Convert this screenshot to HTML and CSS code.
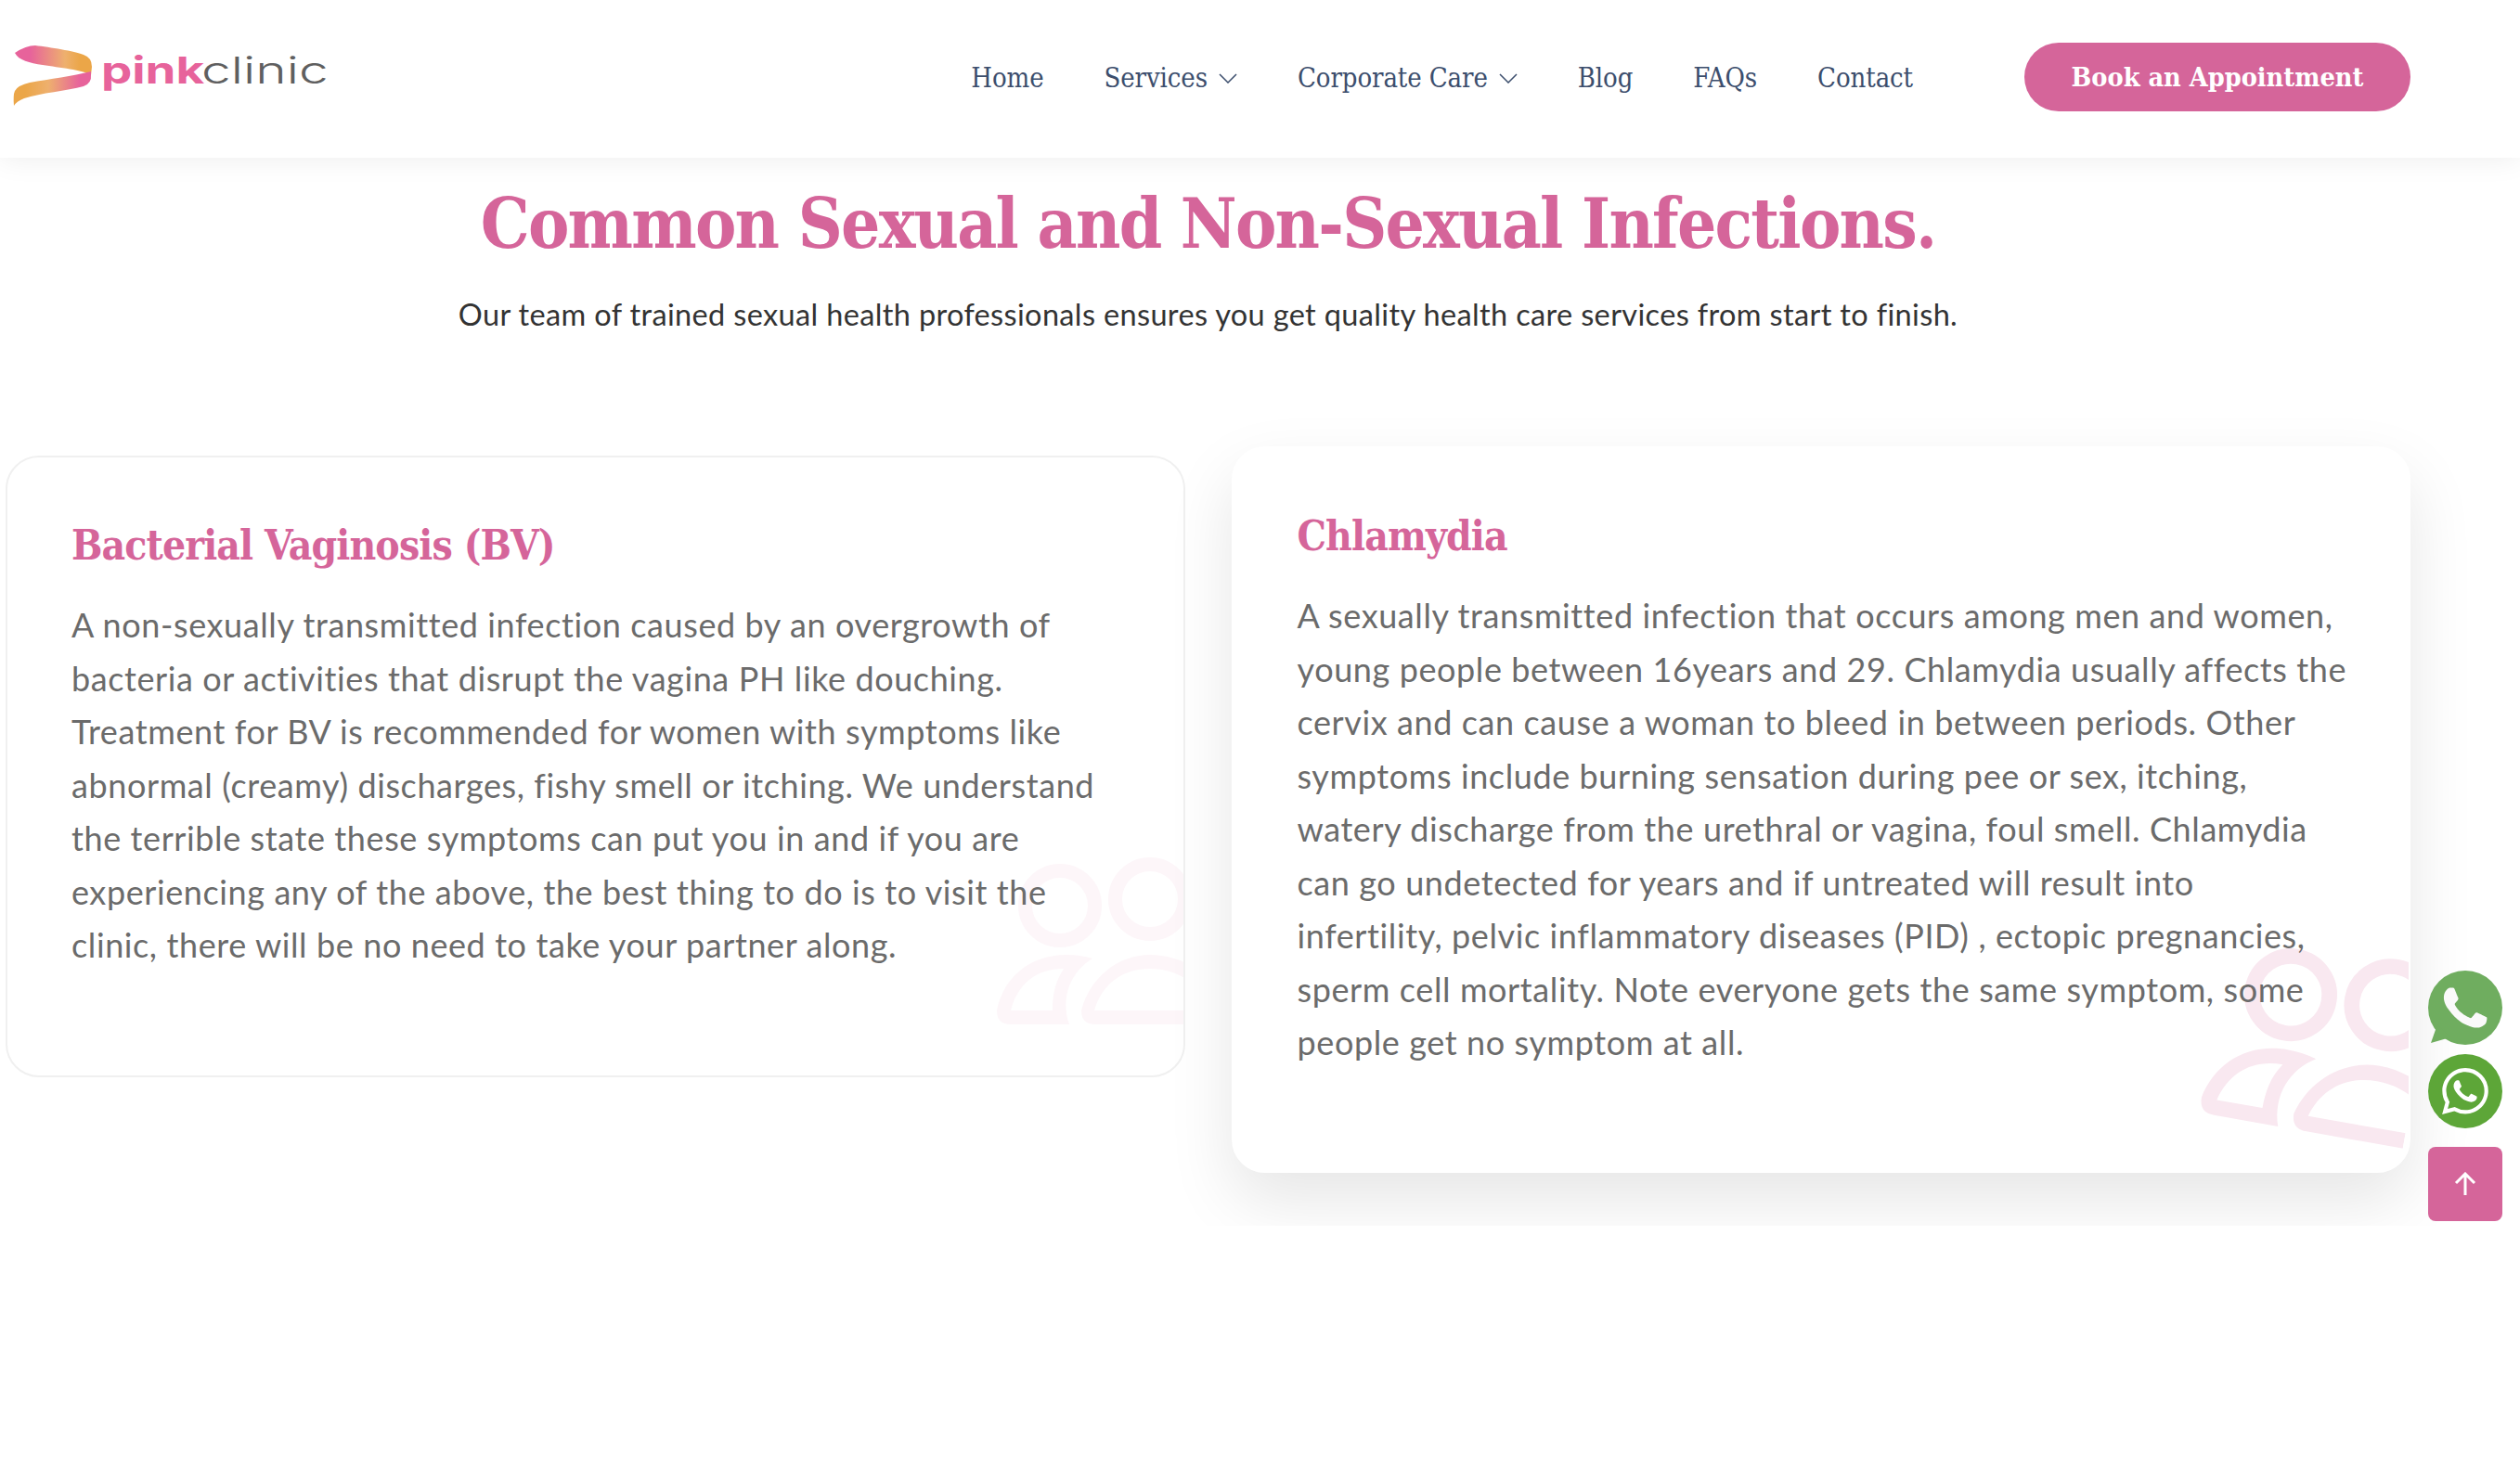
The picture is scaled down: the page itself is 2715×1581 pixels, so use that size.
FILE: index.html
```html
<!DOCTYPE html>
<html lang="en">
<head>
    <meta charset="UTF-8">
    <meta name="viewport" content="width=device-width, initial-scale=1.0">
    <title>Pink Clinic</title>
    <link rel="stylesheet" href="styles.css">
</head>
<body>
    <svg class="sprites" width="0" height="0">
        <defs>
            <symbol id="users" viewBox="1060 910 216 200">
                <circle cx="1143" cy="977" r="37.5" fill="none" stroke="currentColor" stroke-width="15"/>
                <circle cx="1240" cy="970" r="37.5" fill="none" stroke="currentColor" stroke-width="15"/>
                <path fill="currentColor" fill-rule="evenodd" d="M1090 1105Q1075 1105 1075 1090C1082 1055 1110 1030 1150 1030Q1165 1030 1178 1034C1155 1048 1143 1075 1153 1105ZM1090 1090H1135C1135 1075 1137 1060 1147 1045C1117 1045 1097 1062 1090 1090Z"/>
                <path fill="currentColor" fill-rule="evenodd" d="M1181 1105Q1166 1105 1166 1090C1175 1055 1205 1030 1240 1030C1280 1030 1310 1055 1318 1090Q1318 1105 1303 1105ZM1180 1090H1304C1296 1062 1270 1045 1240 1045C1210 1045 1188 1062 1180 1090Z"/>
            </symbol>
            <symbol id="chevron" viewBox="0 0 20 11">
                <path d="M1 1l9 9 9-9" fill="none" stroke="currentColor" stroke-width="1.5"/>
            </symbol>
            <linearGradient id="ribbonTop" x1="0" y1="0" x2="1" y2="0">
                <stop offset="0.2" stop-color="#e7639b"/>
                <stop offset="0.65" stop-color="#eeb06e"/>
                <stop offset="0.85" stop-color="#eba648"/>
            </linearGradient>
            <linearGradient id="ribbonBottom" x1="0" y1="0" x2="1" y2="0">
                <stop offset="0.15" stop-color="#eba648"/>
                <stop offset="0.45" stop-color="#eeb06e"/>
                <stop offset="0.85" stop-color="#e7639b"/>
            </linearGradient>
        </defs>
    </svg>

    <header class="site-header">
        <a class="logo" href="#">
            <svg class="logo-mark" viewBox="0 0 86 66" width="86" height="66">
                <path fill="url(#ribbonTop)" d="M2 9Q14 1 24 1C40 3 66 7 76 11Q85 14 85 24L84 33C75 27 50 25 32 22C18 20 6 17 2 9Z"/>
                <path fill="url(#ribbonBottom)" d="M84 32Q85 42 76 45C58 50 30 52 12 58Q4 61 1 66Q0 54 2 50Q5 44 18 41C40 37 64 34 84 29Z"/>
            </svg>
            <span class="logo-text"><span class="logo-pink">pink</span><span class="logo-clinic">clinic</span></span>
        </a>
        <div class="header-right">
            <nav class="main-nav">
                <a href="#">Home</a>
                <a href="#">Services <svg class="chevron"><use href="#chevron"/></svg></a>
                <a href="#">Corporate Care <svg class="chevron"><use href="#chevron"/></svg></a>
                <a href="#">Blog</a>
                <a href="#">FAQs</a>
                <a href="#">Contact</a>
            </nav>
            <a class="btn-book" href="#">Book an Appointment</a>
        </div>
    </header>

    <section class="infections">
        <h1 class="section-title">Common Sexual and Non-Sexual Infections.</h1>
        <p class="section-sub">Our team of trained sexual health professionals ensures you get quality health care services from start to finish.</p>

        <div class="card-grid">
            <article class="card">
                <h3>Bacterial Vaginosis (BV)</h3>
                <p>A non-sexually transmitted infection caused by an overgrowth of bacteria or activities that disrupt the vagina PH like douching. Treatment for BV is recommended for women with symptoms like abnormal (creamy) discharges, fishy smell or itching. We understand the terrible state these symptoms can put you in and if you are experiencing any of the above, the best thing to do is to visit the clinic, there will be no need to take your partner along.</p>
                <svg class="card-icon"><use href="#users"/></svg>
            </article>
            <article class="card card-active">
                <h3>Chlamydia</h3>
                <p>A sexually transmitted infection that occurs among men and women, young people between 16years and 29. Chlamydia usually affects the cervix and can cause a woman to bleed in between periods. Other symptoms include burning sensation during pee or sex, itching, watery discharge from the urethral or vagina, foul smell. Chlamydia can go undetected for years and if untreated will result into infertility, pelvic inflammatory diseases (PID) , ectopic pregnancies, sperm cell mortality. Note everyone gets the same symptom, some people get no symptom at all.</p>
                <svg class="card-icon"><use href="#users"/></svg>
            </article>
        </div>
    </section>

    <div class="float-actions">
        <a class="float-btn" href="#" aria-label="Call">
            <svg viewBox="0 0 80 80" width="80" height="80">
                <circle cx="40" cy="40" r="40" fill="#6fad5f"/>
                <path d="M10 58L3 78L24 72Z" fill="#6fad5f"/>
                <path fill="#fafafa" transform="translate(-6.2 -6.2) scale(3.85)" d="M17.472 14.382c-.297-.149-1.758-.867-2.03-.967-.273-.099-.471-.148-.67.15-.197.297-.767.966-.94 1.164-.173.199-.347.223-.644.075-.297-.15-1.255-.463-2.39-1.475-.883-.788-1.48-1.761-1.653-2.059-.173-.297-.018-.458.13-.606.134-.133.298-.347.446-.52.149-.174.198-.298.298-.497.099-.198.05-.371-.025-.52-.075-.149-.669-1.612-.916-2.207-.242-.579-.487-.5-.669-.51-.173-.008-.371-.01-.57-.01-.198 0-.52.074-.792.372-.272.297-1.04 1.016-1.04 2.479 0 1.462 1.065 2.875 1.213 3.074.149.198 2.096 3.2 5.077 4.487.709.306 1.262.489 1.694.625.712.227 1.36.195 1.871.118.571-.085 1.758-.719 2.006-1.413.248-.694.248-1.289.173-1.413-.074-.124-.272-.198-.57-.347z"/>
            </svg>
        </a>
        <a class="float-btn" href="#" aria-label="WhatsApp">
            <svg viewBox="0 0 80 80" width="80" height="80">
                <circle cx="40" cy="40" r="40" fill="#5da638"/>
                <path fill="#fff" transform="translate(15 15) scale(2.08)" d="M17.472 14.382c-.297-.149-1.758-.867-2.03-.967-.273-.099-.471-.148-.67.15-.197.297-.767.966-.94 1.164-.173.199-.347.223-.644.075-.297-.15-1.255-.463-2.39-1.475-.883-.788-1.48-1.761-1.653-2.059-.173-.297-.018-.458.13-.606.134-.133.298-.347.446-.52.149-.174.198-.298.298-.497.099-.198.05-.371-.025-.52-.075-.149-.669-1.612-.916-2.207-.242-.579-.487-.5-.669-.51-.173-.008-.371-.01-.57-.01-.198 0-.52.074-.792.372-.272.297-1.04 1.016-1.04 2.479 0 1.462 1.065 2.875 1.213 3.074.149.198 2.096 3.2 5.077 4.487.709.306 1.262.489 1.694.625.712.227 1.36.195 1.871.118.571-.085 1.758-.719 2.006-1.413.248-.694.248-1.289.173-1.413-.074-.124-.272-.198-.57-.347m-5.421 7.403h-.004a9.87 9.87 0 01-5.031-1.378l-.361-.214-3.741.982.998-3.648-.235-.374a9.86 9.86 0 01-1.51-5.26c.001-5.45 4.436-9.884 9.888-9.884 2.64 0 5.122 1.03 6.988 2.898a9.825 9.825 0 012.893 6.994c-.003 5.45-4.437 9.884-9.885 9.884m8.413-18.297A11.815 11.815 0 0012.05 0C5.495 0 .16 5.335.157 11.892c0 2.096.547 4.142 1.588 5.945L.057 24l6.305-1.654a11.882 11.882 0 005.683 1.448h.005c6.554 0 11.89-5.335 11.893-11.893a11.821 11.821 0 00-3.48-8.413z"/>
            </svg>
        </a>
        <a class="back-top" href="#" aria-label="Back to top">
            <svg viewBox="0 0 24 26" width="24" height="26">
                <path d="M12 25V2M2 12L12 2l10 10" fill="none" stroke="#fff" stroke-width="3"/>
            </svg>
        </a>
    </div>
</body>
</html>
```

FILE: styles.css
```css
body {
    margin: 0;
    background: #fff;
    font-family: "Lato", sans-serif;
}
a {
    text-decoration: none;
}
.sprites {
    position: absolute;
}

/* header */
.site-header {
    position: relative;
    z-index: 2;
    box-sizing: border-box;
    height: 170px;
    padding: 0 118px 4px 14px;
    display: flex;
    align-items: center;
    justify-content: space-between;
    background: #fff;
    box-shadow: 0 0 30px rgba(0, 0, 0, 0.08);
}
.logo {
    display: flex;
    align-items: flex-start;
    gap: 9px;
    margin-bottom: 4px;
}
.logo-text {
    display: flex;
    font-family: "Inter", sans-serif;
    font-size: 40px;
    line-height: 56px;
}
.logo-pink {
    display: block;
    width: 108px;
    color: #e7639b;
    font-weight: 700;
    transform: scaleX(1.32);
    transform-origin: left;
}
.logo-clinic {
    display: block;
    color: #5f5f60;
    font-weight: 300;
    transform: scaleX(1.42);
    transform-origin: left;
}
.header-right {
    display: flex;
    align-items: center;
    gap: 120px;
}
.main-nav {
    display: flex;
    align-items: center;
    gap: 65px;
    margin-top: 2px;
}
.main-nav a {
    display: flex;
    align-items: center;
    gap: 12px;
    color: #3c4e6d;
    font-family: "DejaVu Serif Condensed", serif;
    font-size: 29px;
    letter-spacing: -0.1px;
}
.chevron {
    width: 20px;
    height: 11px;
}
.btn-book {
    width: 416px;
    height: 74px;
    display: flex;
    align-items: center;
    justify-content: center;
    border-radius: 37px;
    background: #d5659a;
    color: #fff;
    font-family: "DejaVu Serif Condensed", serif;
    font-weight: 700;
    font-size: 28.6px;
}

/* section */
.infections {
    width: 2591px;
    padding: 26px 119px 57px 6px;
    overflow: hidden;
}
.section-title {
    margin: 0;
    text-align: center;
    color: #d5659a;
    font-family: "DejaVu Serif Condensed", serif;
    font-weight: 700;
    font-size: 74px;
    letter-spacing: -1.75px;
    line-height: 90px;
}
.section-sub {
    margin: 29px 0 0;
    text-align: center;
    color: #333;
    font-size: 32.5px;
    letter-spacing: 0.35px;
    line-height: 48px;
}
.card-grid {
    display: grid;
    grid-template-columns: 1fr 1fr;
    gap: 50px;
    align-items: start;
    margin-top: 118px;
}
.card {
    position: relative;
    margin-top: 10px;
    padding: 62px 65px 111px 69px;
    border: 2px solid #f0f0f0;
    border-radius: 36px;
    background: #fff;
    overflow: hidden;
}
.card h3 {
    margin: 0;
    color: #d5659a;
    font-family: "DejaVu Serif Condensed", serif;
    font-weight: 700;
    font-size: 44px;
    letter-spacing: -0.9px;
    line-height: 66px;
}
.card p {
    position: relative;
    z-index: 1;
    margin: 24px 0 0;
    color: #6b6b6b;
    font-size: 36px;
    letter-spacing: 0.6px;
    line-height: 57.5px;
}
.card-icon {
    position: absolute;
    right: 0;
    bottom: 50px;
    width: 216px;
    height: 200px;
    color: #fdf6f9;
}
.card-active {
    margin-top: 0;
    padding-bottom: 109px;
    border-color: #fff;
    box-shadow: 0 30px 70px rgba(0, 0, 0, 0.1);
}
.card-active .card-icon {
    right: -2px;
    bottom: 49px;
    color: #f9e8f0;
    transform: rotate(10deg) scale(1.11);
}

/* floating buttons */
.float-actions {
    position: fixed;
    right: 19px;
    bottom: 265px;
    display: flex;
    flex-direction: column;
    gap: 10px;
    z-index: 3;
}
.float-btn {
    display: block;
    width: 80px;
    height: 80px;
}
.float-btn svg {
    display: block;
    overflow: visible;
}
.back-top {
    width: 80px;
    height: 80px;
    margin-top: 10px;
    display: flex;
    align-items: center;
    justify-content: center;
    border-radius: 8px;
    background: #d5659a;
}
```
